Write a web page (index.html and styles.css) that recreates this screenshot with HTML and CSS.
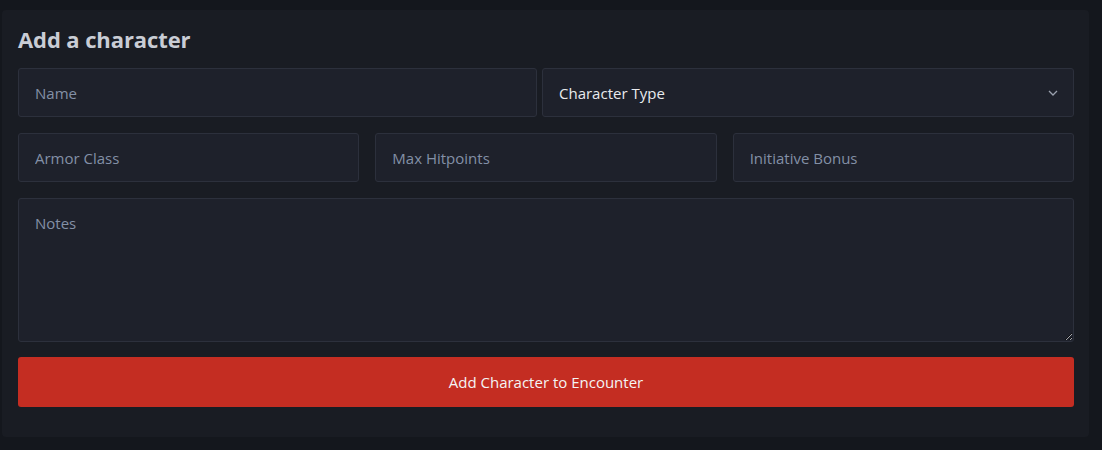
FILE: index.html
```html
<!DOCTYPE html>
<html>
<head>
<meta charset="utf-8">
<link rel="stylesheet" href="styles.css">
</head>
<body>
<div class="page">
  <section class="card">
    <h2 class="title">Add a character</h2>
    <form class="form">
      <div class="row row-top">
        <input class="field" type="text" placeholder="Name">
        <div class="select-wrap">
          <div class="field select">Character Type</div>
          <svg class="chev" width="10" height="6" viewBox="0 0 10 6"><path d="M1 1 L5 5 L9 1" fill="none" stroke="#9aa0ad" stroke-width="1.3"/></svg>
        </div>
      </div>
      <div class="row row-three">
        <input class="field" type="text" placeholder="Armor Class">
        <input class="field" type="text" placeholder="Max Hitpoints">
        <input class="field" type="text" placeholder="Initiative Bonus">
      </div>
      <textarea class="field notes" placeholder="Notes"></textarea>
      <button class="btn" type="button">Add Character to Encounter</button>
    </form>
  </section>
</div>
</body>
</html>
```
FILE: styles.css
```css
html, body {
  margin: 0;
  padding: 0;
  background: #14171d;
  font-family: "Open Sans", "Noto Sans", sans-serif;
}
.page {
  padding: 10px 13px 13px 2px;
}
.card {
  background: #191c23;
  border-radius: 4px;
  padding: 14px 15px 30px 16px;
  height: 427px;
  box-sizing: border-box;
}
.title {
  margin: 0 0 14px 0;
  font-size: 22px;
  line-height: 30px;
  font-weight: 700;
  color: #c9cdd5;
  letter-spacing: -0.1px;
}
.form {
  display: flex;
  flex-direction: column;
  gap: 16px;
}
.row {
  display: grid;
}
.row-top {
  grid-template-columns: 519px 1fr;
  gap: 5px;
}
.row-three {
  grid-template-columns: 1fr 1fr 1fr;
  gap: 16px;
}
.field {
  box-sizing: border-box;
  height: 49px;
  background: #1e212b;
  border: 1px solid #2c303c;
  border-radius: 3px;
  padding: 0 16px;
  font-family: "Open Sans", "Noto Sans", sans-serif;
  font-size: 15px;
  color: #e4e6eb;
  outline: none;
  width: 100%;
  min-width: 0;
}
.field::placeholder {
  color: #8390a6;
}
.select-wrap {
  position: relative;
}
.select {
  display: flex;
  align-items: center;
  color: #e8eaee;
}
.chev {
  position: absolute;
  right: 16px;
  top: 22px;
}
.notes {
  height: 144px;
  padding-top: 14px;
  resize: vertical;
  display: block;
}
.btn {
  height: 50px;
  margin-top: -1px;
  background: #c42d22;
  border: none;
  border-radius: 3px;
  color: #f4f4f4;
  font-family: "Open Sans", "Noto Sans", sans-serif;
  font-size: 15px;
  cursor: pointer;
}
```
